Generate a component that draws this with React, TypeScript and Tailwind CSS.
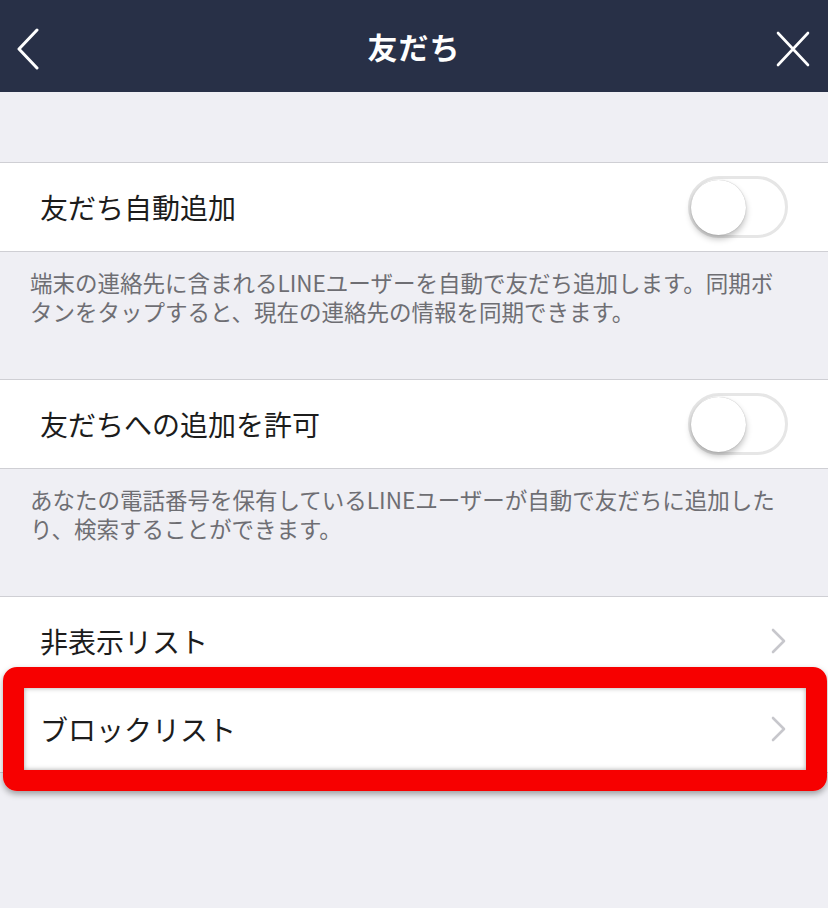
import React from 'react';

const font = { fontFamily: '"Noto Sans CJK JP", "Noto Sans", sans-serif' };

const Toggle: React.FC = () => (
  <div className="relative w-[100px] h-[62px] rounded-full border-[3px] border-[#e6e6e6] bg-white">
    <div className="absolute left-0 top-[1px] w-[55px] h-[55px] rounded-full bg-white shadow-[0_4px_6px_rgba(0,0,0,0.25),0_0_1px_rgba(0,0,0,0.3)]" />
  </div>
);

const Chevron: React.FC = () => (
  <svg width="16" height="26" viewBox="0 0 16 26" fill="none">
    <path d="M2 2 L13 13 L2 24" stroke="#c7c7cc" strokeWidth="2.6" strokeLinecap="round" strokeLinejoin="round" />
  </svg>
);

const ToggleRow: React.FC<{ label: string }> = ({ label }) => (
  <div className="flex items-center justify-between h-[90px] bg-white border-y border-[#cfcfd4] pl-[40px] pr-[40px]">
    <span className="text-[28px] text-[#1c1c1c] leading-none">{label}</span>
    <Toggle />
  </div>
);

const Note: React.FC<{ children: React.ReactNode }> = ({ children }) => (
  <p className="pt-[16px] pb-[53px] pl-[30px] pr-[10px] text-[22.5px] leading-[29px] text-[#6e6e73] whitespace-nowrap">
    {children}
  </p>
);

const LinkRow: React.FC<{ label: string; children?: React.ReactNode; last?: boolean }> = ({ label, children, last }) => (
  <div className={`relative flex items-center justify-between h-[88px] bg-white pl-[40px] pr-[41px] ${last ? 'border-b border-[#cfcfd4]' : ''}`}>
    <span className="text-[28px] text-[#1c1c1c] leading-none">{label}</span>
    <Chevron />
    {children}
  </div>
);

const App: React.FC = () => {
  return (
    <div className="w-[828px] h-[908px] bg-[#efeff4] overflow-hidden" style={font}>
      {/* Header */}
      <header className="relative flex items-center justify-center h-[92px] bg-[#283047]">
        <button className="absolute left-[15px] top-[28px]">
          <svg width="26" height="42" viewBox="0 0 26 42" fill="none">
            <path d="M22 2 L4 21 L22 40" stroke="white" strokeWidth="3" strokeLinecap="round" strokeLinejoin="round" />
          </svg>
        </button>
        <h1 className="text-[30px] font-bold text-white tracking-[1px]">友だち</h1>
        <button className="absolute right-[18px] top-[31px]">
          <svg width="34" height="36" viewBox="0 0 34 36" fill="none">
            <path d="M2 2 L32 34 M32 2 L2 34" stroke="white" strokeWidth="2.6" strokeLinecap="round" />
          </svg>
        </button>
      </header>

      <div className="h-[70px]" />

      <ToggleRow label="友だち自動追加" />
      <Note>
        端末の連絡先に含まれるLINEユーザーを自動で友だち追加します。同期ボ
        <br />
        タンをタップすると、現在の連絡先の情報を同期できます。
      </Note>

      <ToggleRow label="友だちへの追加を許可" />
      <Note>
        あなたの電話番号を保有しているLINEユーザーが自動で友だちに追加した
        <br />
        り、検索することができます。
      </Note>

      <div className="border-t border-[#cfcfd4]">
        <LinkRow label="非表示リスト" />
        <LinkRow label="ブロックリスト" last>
          <div className="absolute -top-[18px] -bottom-[19px] left-[3px] right-[1px] rounded-[14px] border-[21px] border-[#f70000] shadow-[0_3px_6px_rgba(0,0,0,0.35),inset_0_0_5px_rgba(0,0,0,0.35)]" />
        </LinkRow>
      </div>
    </div>
  );
};

export default App;
